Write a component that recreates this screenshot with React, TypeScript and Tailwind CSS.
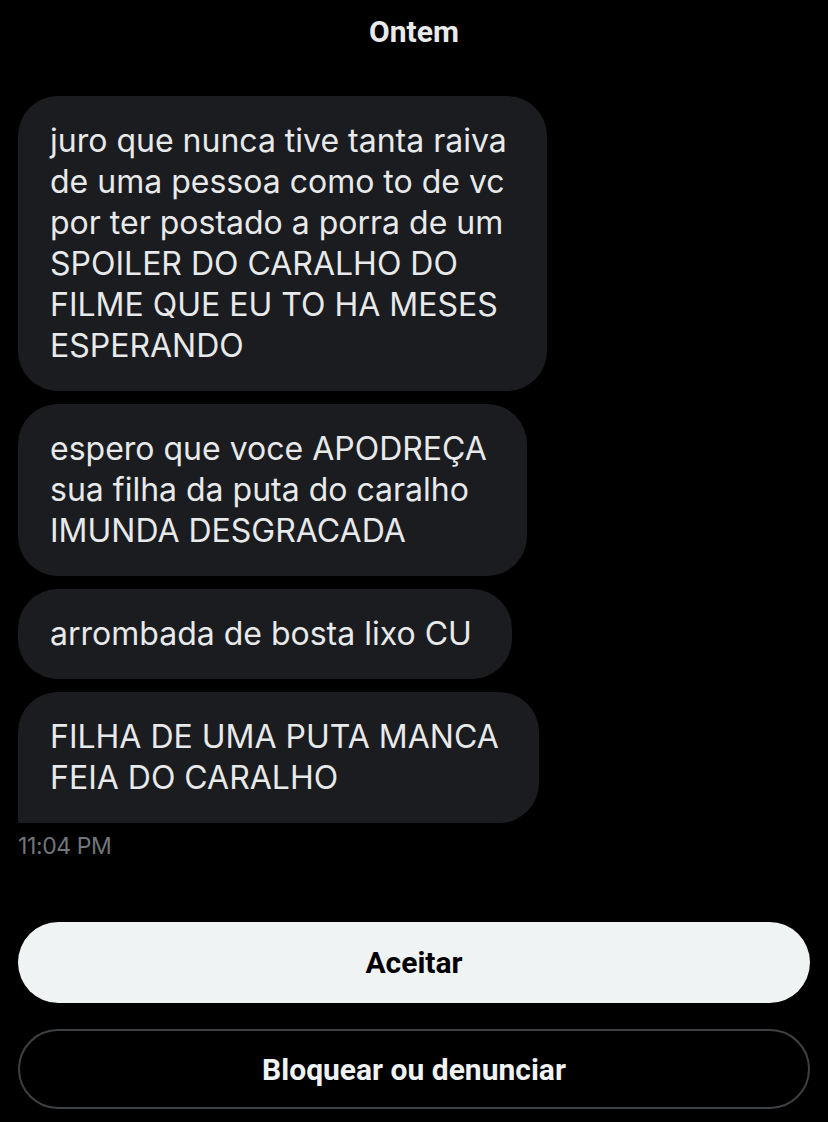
const messages = [
  ["juro que nunca tive tanta raiva", "de uma pessoa como to de vc", "por ter postado a porra de um", "SPOILER DO CARALHO DO", "FILME QUE EU TO HA MESES", "ESPERANDO"],
  ["espero que voce APODREÇA", "sua filha da puta do caralho", "IMUNDA DESGRACADA"],
  ["arrombada de bosta lixo CU"],
  ["FILHA DE UMA PUTA MANCA", "FEIA DO CARALHO"],
];

export default function App() {
  return (
    <div className="w-[828px] h-[1122px] bg-black px-[18px] font-['Inter',sans-serif] overflow-hidden">
      <div className="h-[62px] flex items-center justify-center">
        <span className="text-[30px] font-bold text-[#e7e9ea] font-['Roboto',sans-serif]">Ontem</span>
      </div>

      <div className="mt-[34px] flex flex-col items-start gap-[13px]">
        {messages.map((lines, i) => (
          <div
            key={i}
            className={
              i === messages.length - 1
                ? "w-fit bg-[#1b1c1f] rounded-[40px] rounded-bl-none pl-8 pr-[40px] pt-[24px] pb-[25px] text-[32px] leading-[41px] text-[#e7e9ea]"
                : "w-fit bg-[#1b1c1f] rounded-[40px] pl-8 pr-[40px] pt-[24px] pb-[25px] text-[32px] leading-[41px] text-[#e7e9ea]"
            }
          >
            {lines.map((l) => (
              <div key={l} className="whitespace-nowrap">{l}</div>
            ))}
          </div>
        ))}
      </div>

      <div className="mt-[10px] text-[23px] leading-[26px] text-[#71767b] tracking-[-0.4px]">11:04 PM</div>

      <div className="mt-[63px] flex flex-col gap-[26px] font-['Roboto',sans-serif]">
        <button className="h-[81px] w-full rounded-full bg-[#eff3f4] text-black text-[30px] font-bold">
          Aceitar
        </button>
        <button className="h-[80px] w-full rounded-full border-2 border-[#3e4144] text-[#eff3f4] text-[30px] font-bold">
          Bloquear ou denunciar
        </button>
      </div>
    </div>
  );
}
